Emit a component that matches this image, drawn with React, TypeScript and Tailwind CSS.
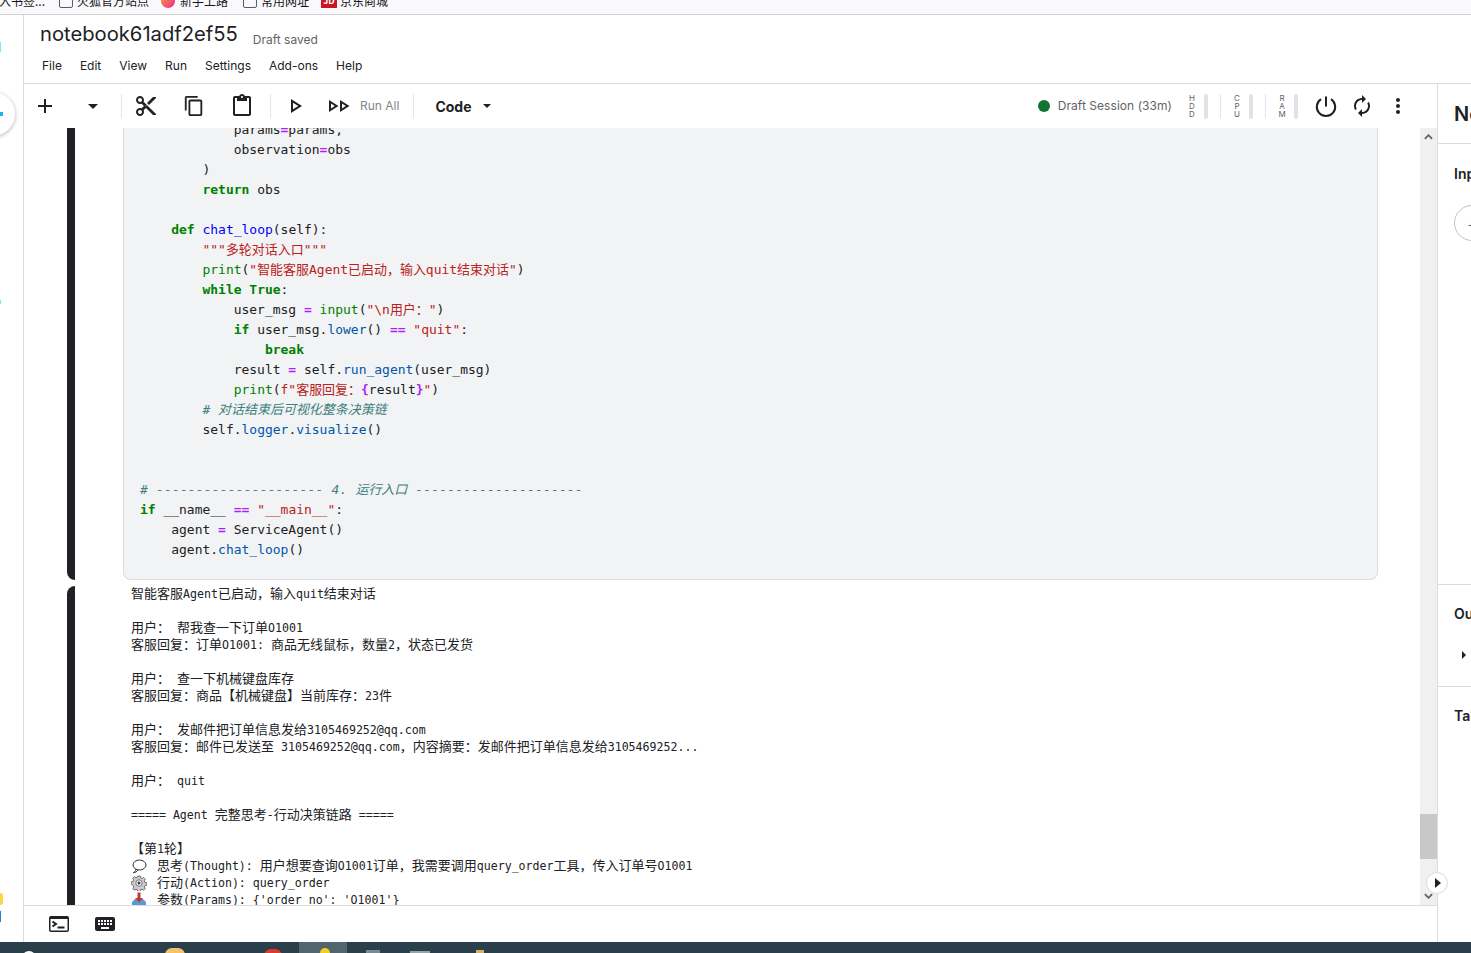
import React from "react";

const INK = "#202124";

function Icon({ d, className = "w-6 h-6" }: { d: string; className?: string }) {
  return (
    <svg viewBox="0 0 24 24" className={`${className} shrink-0`} fill={INK}>
      <path d={d} />
    </svg>
  );
}

const P = {
  add: "M19 13h-6v6h-2v-6H5v-2h6V5h2v6h6v2z",
  cut: "M9.64 7.64c.23-.5.36-1.05.36-1.64 0-2.21-1.79-4-4-4S2 3.79 2 6s1.79 4 4 4c.59 0 1.14-.13 1.64-.36L10 12l-2.36 2.36C7.14 14.13 6.59 14 6 14c-2.21 0-4 1.79-4 4s1.79 4 4 4 4-1.79 4-4c0-.59-.13-1.14-.36-1.64L12 14l7 7h3v-1L9.64 7.64zM6 8c-1.1 0-2-.89-2-2s.9-2 2-2 2 .89 2 2-.9 2-2 2zm0 12c-1.1 0-2-.89-2-2s.9-2 2-2 2 .89 2 2-.9 2-2 2zm6-7.5c-.28 0-.5-.22-.5-.5s.22-.5.5-.5.5.22.5.5-.22.5-.5.5zM19 3l-6 6 2 2 7-7V3h-3z",
  copy: "M16 1H4c-1.1 0-2 .9-2 2v14h2V3h12V1zm3 4H8c-1.1 0-2 .9-2 2v14c0 1.1.9 2 2 2h11c1.1 0 2-.9 2-2V7c0-1.1-.9-2-2-2zm0 16H8V7h11v14z",
  paste: "M19 2h-4.18C14.4.84 13.3 0 12 0c-1.3 0-2.4.84-2.82 2H5c-1.1 0-2 .9-2 2v16c0 1.1.9 2 2 2h14c1.1 0 2-.9 2-2V4c0-1.1-.9-2-2-2zm-7 0c.55 0 1 .45 1 1s-.45 1-1 1-1-.45-1-1 .45-1 1-1zm7 18H5V4h2v3h10V4h2v16z",
  play: "M10 8.64L15.27 12 10 15.36V8.64M8 5v14l11-7L8 5z",
  runAll: "M3 6v12l9.5-6L3 6zm2 3.6L8.8 12 5 14.4V9.6zM14 6v12l9.5-6L14 6zm2 3.6l3.8 2.4-3.8 2.4V9.6z",
  autorenew: "M12 6v3l4-4-4-4v3c-4.42 0-8 3.58-8 8 0 1.57.46 3.03 1.24 4.26L6.7 14.8c-.45-.83-.7-1.79-.7-2.8 0-3.31 2.69-6 6-6zm6.76 1.74L17.3 9.2c.44.84.7 1.79.7 2.8 0 3.31-2.69 6-6 6v-3l-4 4 4 4v-3c4.42 0 8-3.58 8-8 0-1.57-.46-3.03-1.24-4.26z",
  more: "M12 8c1.1 0 2-.9 2-2s-.9-2-2-2-2 .9-2 2 .9 2 2 2zm0 2c-1.1 0-2 .9-2 2s.9 2 2 2 2-.9 2-2-.9-2-2-2zm0 6c-1.1 0-2 .9-2 2s.9 2 2 2 2-.9 2-2-.9-2-2-2z",
  keyboard: "M20 5H4c-1.1 0-1.99.9-1.99 2L2 17c0 1.1.9 2 2 2h16c1.1 0 2-.9 2-2V7c0-1.1-.9-2-2-2zm-9 3h2v2h-2V8zm0 3h2v2h-2v-2zM8 8h2v2H8V8zm0 3h2v2H8v-2zm-1 2H5v-2h2v2zm0-3H5V8h2v2zm9 7H8v-2h8v2zm0-4h-2v-2h2v2zm0-3h-2V8h2v2zm3 3h-2v-2h2v2zm0-3h-2V8h2v2z",
};

function Caret({ className = "" }: { className?: string }) {
  return (
    <span className={`flex w-6 h-6 shrink-0 items-center justify-center ${className}`}>
      <span className="w-0 h-0 border-l-[5px] border-r-[5px] border-t-[5px] border-l-transparent border-r-transparent border-t-[#202124]" />
    </span>
  );
}

function SmallCaret({ className = "" }: { className?: string }) {
  return (
    <span className={`flex w-6 h-6 shrink-0 items-center justify-center ${className}`}>
      <span className="w-0 h-0 border-l-[4px] border-r-[4px] border-t-[4px] border-l-transparent border-r-transparent border-t-[#202124]" />
    </span>
  );
}

function Divider({ className = "" }: { className?: string }) {
  return <span className={`w-px h-6 shrink-0 bg-[#e3e5e8] ${className}`} />;
}

function Meter({ letters, className = "" }: { letters: string; className?: string }) {
  return (
    <div className={`flex items-center shrink-0 ${className}`}>
      <span className="flex flex-col items-center text-[8px] leading-[8px] w-[8px] text-[#5f6368]">
        {letters.split("").map((l, i) => (
          <span key={i}>{l}</span>
        ))}
      </span>
      <span className="ml-[8px] w-[4px] h-[25px] rounded-[2px] bg-[#e1e2e4]" />
    </div>
  );
}

type Tok = [string, string?];

const kw = "font-bold text-[#008000]";
const st = "text-[#ba2121]";
const op = "font-bold text-[#aa22ff]";
const fn = "text-[#0000ff]";
const me = "text-[#0055aa]";
const bi = "text-[#008000]";
const cm = "italic text-[#408080]";
const cd = "italic text-[#408080] tracking-[0.17px]";

const code: Tok[][] = [
  [["            params"], ["=", op], ["params,"]],
  [["            observation"], ["=", op], ["obs"]],
  [["        )"]],
  [["        "], ["return", kw], [" obs"]],
  [[""]],
  [["    "], ["def", kw], [" "], ["chat_loop", fn], ["(self):"]],
  [["        "], ['"""多轮对话入口"""', st]],
  [["        "], ["print", bi], ["("], ['"智能客服Agent已启动，输入quit结束对话"', st], [")"]],
  [["        "], ["while", kw], [" "], ["True", kw], [":"]],
  [["            user_msg "], ["=", op], [" "], ["input", bi], ["("], ['"\\n用户："', st], [")"]],
  [["            "], ["if", kw], [" user_msg."], ["lower", me], ["() "], ["==", op], [" "], ['"quit"', st], [":"]],
  [["                "], ["break", kw]],
  [["            result "], ["=", op], [" self."], ["run_agent", me], ["(user_msg)"]],
  [["            "], ["print", bi], ["("], ['f"客服回复：', st], ["{", op], ["result"], ["}", op], ['"', st], [")"]],
  [["        "], ["# 对话结束后可视化整条决策链", cm]],
  [["        self."], ["logger", me], ["."], ["visualize", me], ["()"]],
  [[""]],
  [[""]],
  [["# --------------------- 4. ", cd], ["运行入口", cm], [" ---------------------", cd]],
  [["if", kw], [" __name__ "], ["==", op], [" "], ['"__main__"', st], [":"]],
  [["    agent "], ["=", op], [" ServiceAgent()"]],
  [["    agent."], ["chat_loop", me], ["()"]],
];

function Mixed({ text }: { text: string }) {
  const parts = text.split(/([\u2E80-\uFFEF]+)/);
  return (
    <>
      {parts.map((p, i) =>
        i % 2 ? (
          <span key={i} className="text-[13px]">{p}</span>
        ) : (
          <span key={i} className="text-[11.6px]">{p}</span>
        )
      )}
    </>
  );
}

function OutLine({ text, icon }: { text: string; icon?: React.ReactNode }) {
  return (
    <div className="h-[17px] leading-[17px] whitespace-pre flex items-center">
      {icon && <span className="w-[26px] shrink-0 flex">{icon}</span>}
      <span><Mixed text={text || " "} /></span>
    </div>
  );
}

const Bubble = (
  <svg viewBox="0 0 16 16" className="w-4 h-4" fill="none" stroke="#333" strokeWidth="1">
    <ellipse cx="8.5" cy="7" rx="6.5" ry="5" />
    <path d="M5 11.2 C4.6 13 3.6 14 2.4 14.6 C4.4 14.6 6 13.6 7 12" />
  </svg>
);
const Gear = (
  <svg viewBox="0 0 16 16" className="w-4 h-4" fill="#c9cbce" stroke="#444" strokeWidth="0.7">
    <path d="M6.8 1h2.4l.4 1.9 1.4.6 1.7-1 1.6 1.7-1 1.6.6 1.5 1.9.4v2.4l-1.9.4-.6 1.4 1 1.7-1.7 1.6-1.6-1-1.5.6-.4 1.9H6.8l-.4-1.9-1.4-.6-1.7 1-1.6-1.7 1-1.6-.6-1.5L.2 9.2V6.8l1.9-.4.6-1.4-1-1.7 1.7-1.6 1.6 1 1.5-.6z" />
    <circle cx="8" cy="8" r="3.2" fill="#fff" />
    <circle cx="8" cy="8" r="1.2" fill="#333" />
  </svg>
);
const Inbox = (
  <svg viewBox="0 0 16 16" className="w-4 h-4">
    <path d="M1 10 L4 7 H12 L15 10 V15 H1z" fill="#5b9bd5" />
    <path d="M6.5 0.5 H9.5 V6 H12 L8 10.5 L4 6 H6.5z" fill="#c0392b" />
  </svg>
);

const Panel = ({ title, className = "" }: { title: string; className?: string }) => (
  <div className={`text-[14px] font-semibold leading-[20px] text-[#202124] whitespace-nowrap ${className}`}>{title}</div>
);

export default function App() {
  return (
    <div className="w-full h-screen overflow-hidden flex flex-col bg-white text-[#202124] font-['Inter','Noto_Sans_CJK_SC',sans-serif]">
      {/* Browser bookmark bar */}
      <div className="h-[15px] shrink-0 overflow-hidden bg-[#f9f9fb] border-b border-[#d0d0d3]">
        <div className="flex items-center -mt-[7px] h-[16px] text-[12px] text-[#15141a] whitespace-nowrap font-['Noto_Sans_CJK_SC',sans-serif]">
          <span className="-ml-[1px] w-[60px]">入书签...</span>
          <span className="w-[14px] h-[13px] rounded-[2px] border border-[#5b5b66]" />
          <span className="ml-[4px] w-[84px]">火狐官方站点</span>
          <span className="w-[14px] h-[14px] rounded-full bg-gradient-to-br from-[#ff9500] to-[#e31587]" />
          <span className="ml-[5px] w-[63px]">新手上路</span>
          <span className="w-[14px] h-[13px] rounded-[2px] border border-[#5b5b66]" />
          <span className="ml-[4px] w-[60px]">常用网址</span>
          <span className="w-[16px] h-[14px] bg-[#c81623] text-white text-[9px] font-bold leading-[14px] text-center">JD</span>
          <span className="ml-[3px]">京东商城</span>
        </div>
      </div>

      <div className="flex-1 min-h-0 flex">
        {/* Left rail */}
        <div className="relative w-[24px] shrink-0 border-r border-[#dadce0] bg-white overflow-hidden">
          <span className="absolute -left-[29px] top-[77px] w-[44px] h-[44px] rounded-full bg-white shadow-[0_1px_4px_rgba(0,0,0,0.3)]" />
          <span className="absolute left-0 top-[97px] w-[3px] h-[4px] bg-[#20b2f5]" />
          <span className="absolute left-0 top-[27px] w-px h-[10px] bg-[#7fe6ff]" />
          <span className="absolute left-0 top-[285px] w-px h-[4px] bg-[#7fe6ff]" />
          <span className="absolute -left-[3px] top-[878px] w-[6px] h-[12px] rounded-full bg-[#fcd53f]" />
          <span className="absolute left-0 top-[896px] w-px h-[11px] bg-[#2a7fd5]" />
        </div>

        {/* Main column */}
        <div className="flex-1 min-w-0 flex flex-col">
          {/* Header */}
          <div className="h-[69px] shrink-0 border-b border-[#dadce0] pl-4 flex flex-col">
            <div className="flex items-start h-[38px]">
              <span className="mt-[5px] text-[20.2px] leading-[28px] text-[#202124]">notebook61adf2ef55</span>
              <span className="mt-[16px] ml-[15px] text-[12px] leading-[18px] text-[#5f6368]">Draft saved</span>
            </div>
            <div className="flex items-center h-[18px] mt-[4px] pl-[2px] gap-[18px] text-[12px] text-[#202124]">
              <span>File</span>
              <span>Edit</span>
              <span>View</span>
              <span>Run</span>
              <span>Settings</span>
              <span>Add-ons</span>
              <span>Help</span>
            </div>
          </div>

          <div className="flex-1 min-h-0 flex">
            <div className="flex-1 min-w-0 flex flex-col">
              {/* Toolbar */}
              <div className="h-[44px] shrink-0 flex items-center pr-[27px]">
                <Icon d={P.add} className="ml-[9px] w-6 h-6" />
                <Caret className="ml-[24px]" />
                <Divider className="ml-[16px]" />
                <Icon d={P.cut} className="ml-[12px] w-6 h-6" />
                <Icon d={P.copy} className="ml-[25px] w-[22px] h-[22px]" />
                <Icon d={P.paste} className="ml-[25px] w-6 h-6" />
                <Divider className="ml-[16px]" />
                <Icon d={P.play} className="ml-[12px] w-6 h-6" />
                <Icon d={P.runAll} className="ml-[19px] w-6 h-6" />
                <span className="ml-[10px] text-[12px] text-[#80868b] whitespace-nowrap">Run All</span>
                <Divider className="ml-[14px]" />
                <span className="ml-[21px] text-[14px] font-bold text-[#202124]">Code</span>
                <SmallCaret className="ml-[4px]" />
                <div className="ml-auto flex items-center">
                  <span className="w-[12px] h-[12px] rounded-full bg-[#137333]" />
                  <span className="ml-[8px] text-[12px] text-[#5f6368] whitespace-nowrap tracking-[0.05px]">Draft Session (33m)</span>
                  <Meter letters="HDD" className="ml-[16px]" />
                  <Divider className="ml-[12px]" />
                  <Meter letters="CPU" className="ml-[12px]" />
                  <Divider className="ml-[12px]" />
                  <Meter letters="RAM" className="ml-[12px]" />
                  <svg viewBox="0 0 24 24" className="ml-[16px] w-6 h-6 shrink-0" fill="none" stroke={INK} strokeWidth="2">
                    <path d="M12 2.5v10" />
                    <path d="M7 5.2a9.2 9.2 0 1 0 10 0" />
                  </svg>
                  <Icon d={P.autorenew} className="ml-[12px] w-6 h-6" />
                  <Icon d={P.more} className="ml-[12px] w-6 h-6" />
                </div>
              </div>

              {/* Content + scrollbar */}
              <div className="flex-1 min-h-0 flex relative">
                <div className="flex-1 min-w-0 overflow-hidden">
                  <div className="-mt-[8px] flex">
                    <div className="ml-[43px] w-[8px] shrink-0 bg-[#202124] rounded-bl-lg" />
                    <div className="ml-[48px] w-[1255px] shrink-0 bg-[#f1f3f4] border border-t-0 border-[#dadce0] rounded-b-lg pl-4 pb-[19px] font-['DejaVu_Sans_Mono','Noto_Sans_CJK_SC',monospace] text-[12.97px] leading-[20px] text-[#212121]">
                      {code.map((line, i) => (
                        <div key={i} className="h-[20px] whitespace-pre">
                          {line.map((t, j) => (
                            <span key={j} className={t[1] ?? ""}>{t[0]}</span>
                          ))}
                        </div>
                      ))}
                    </div>
                  </div>
                  <div className="mt-[6px] flex">
                    <div className="ml-[43px] w-[8px] h-[400px] shrink-0 bg-[#202124] rounded-tl-lg" />
                    <div className="ml-[56px] -mt-[1px] font-['DejaVu_Sans_Mono','Noto_Sans_CJK_SC',monospace] text-[#202124]">
                      <OutLine text="智能客服Agent已启动，输入quit结束对话" />
                      <OutLine text="" />
                      <OutLine text="用户： 帮我查一下订单O1001" />
                      <OutLine text="客服回复：订单O1001: 商品无线鼠标，数量2，状态已发货" />
                      <OutLine text="" />
                      <OutLine text="用户： 查一下机械键盘库存" />
                      <OutLine text="客服回复：商品【机械键盘】当前库存：23件" />
                      <OutLine text="" />
                      <OutLine text="用户： 发邮件把订单信息发给3105469252@qq.com" />
                      <OutLine text="客服回复：邮件已发送至 3105469252@qq.com，内容摘要：发邮件把订单信息发给3105469252..." />
                      <OutLine text="" />
                      <OutLine text="用户： quit" />
                      <OutLine text="" />
                      <OutLine text="===== Agent 完整思考-行动决策链路 =====" />
                      <OutLine text="" />
                      <OutLine text="【第1轮】" />
                      <OutLine icon={Bubble} text="思考(Thought): 用户想要查询O1001订单，我需要调用query_order工具，传入订单号O1001" />
                      <OutLine icon={Gear} text="行动(Action): query_order" />
                      <OutLine icon={Inbox} text="参数(Params): {'order_no': 'O1001'}" />
                    </div>
                  </div>
                </div>

                {/* Scrollbar */}
                <div className="w-[17px] shrink-0 bg-[#f0f0f0] flex flex-col items-center">
                  <svg viewBox="0 0 10 6" className="w-[9px] h-[6px] mt-[6px] shrink-0" fill="none" stroke="#5f6368" strokeWidth="2">
                    <path d="M1 5l4-4 4 4" />
                  </svg>
                  <div className="mt-[674px] w-full h-[45px] shrink-0 bg-[#c8c8c8]" />
                  <svg viewBox="0 0 10 6" className="w-[9px] h-[6px] mt-[34px] shrink-0" fill="none" stroke="#5f6368" strokeWidth="2">
                    <path d="M1 1l4 4 4-4" />
                  </svg>
                </div>

                {/* Collapse toggle */}
                <div className="absolute right-[-11px] top-[744px] z-10 w-[22px] h-[22px] rounded-full bg-white border border-[#dadce0] flex items-center justify-center">
                  <span className="ml-[1px] w-0 h-0 border-t-[5px] border-b-[5px] border-l-[6px] border-t-transparent border-b-transparent border-l-[#202124]" />
                </div>
              </div>

              {/* Bottom bar */}
              <div className="h-[37px] shrink-0 border-t border-[#dadce0] flex items-center">
                <svg viewBox="0 0 20 16" className="ml-[25px] w-[20px] h-[16px] shrink-0">
                  <rect x="0" y="0" width="20" height="16" rx="2" fill={INK} />
                  <rect x="1.5" y="3" width="17" height="11.5" fill="#fff" />
                  <path d="M3.5 5.5l3.5 2.5-3.5 2.5" fill="none" stroke={INK} strokeWidth="2" />
                  <rect x="8.5" y="10.5" width="7" height="2" fill={INK} />
                </svg>
                <Icon d={P.keyboard} className="ml-[24px] w-6 h-6" />
              </div>
            </div>

            {/* Right panel */}
            <div className="w-[34px] shrink-0 border-l border-[#dadce0] overflow-hidden flex flex-col">
              <div className="w-[300px] h-[60px] shrink-0 border-b border-[#dadce0] pl-4 pt-[16px] text-[20px] leading-[28px] font-semibold text-[#202124]">Notebook</div>
              <div className="w-[300px] h-[441px] shrink-0 border-b border-[#dadce0] pl-4 pt-[20px]">
                <Panel title="Input" />
                <div className="mt-[21px] w-[36px] h-[36px] rounded-full border border-[#bdc1c6] flex items-center justify-center text-[#5f6368] text-[14px]">+</div>
              </div>
              <div className="w-[300px] h-[102px] shrink-0 border-b border-[#dadce0] pl-4 pt-[19px]">
                <Panel title="Output" />
                <span className="block ml-[8px] mt-[27px] w-0 h-0 border-t-[4px] border-b-[4px] border-l-[4px] border-t-transparent border-b-transparent border-l-[#202124]" />
              </div>
              <div className="w-[300px] pl-4 pt-[19px]">
                <Panel title="Table of contents" />
              </div>
            </div>
          </div>
        </div>
      </div>

      {/* Desktop taskbar */}
      <div className="relative h-[11px] shrink-0 bg-[#29404a] overflow-hidden">
        <span className="absolute left-[22px] top-[9px] w-[14px] h-[14px] rounded-full bg-white" />
        <span className="absolute left-[165px] top-[6px] w-[20px] h-[14px] rounded-full bg-[#f5c26b]" />
        <span className="absolute left-[264px] top-[7px] w-[18px] h-[14px] rounded-full bg-[#e0392b]" />
        <span className="absolute left-[299px] top-0 w-[48px] h-[11px] bg-[#51656e]" />
        <span className="absolute left-[320px] top-[6px] w-[10px] h-[10px] rounded-full bg-[#f5d020]" />
        <span className="absolute left-[366px] top-[8px] w-[14px] h-[10px] bg-[#7b8a90]" />
        <span className="absolute left-[410px] top-[9px] w-[20px] h-[10px] bg-[#9aa5aa]" />
        <span className="absolute left-[476px] top-[8px] w-[8px] h-[10px] bg-[#d8b35c]" />
      </div>
    </div>
  );
}
